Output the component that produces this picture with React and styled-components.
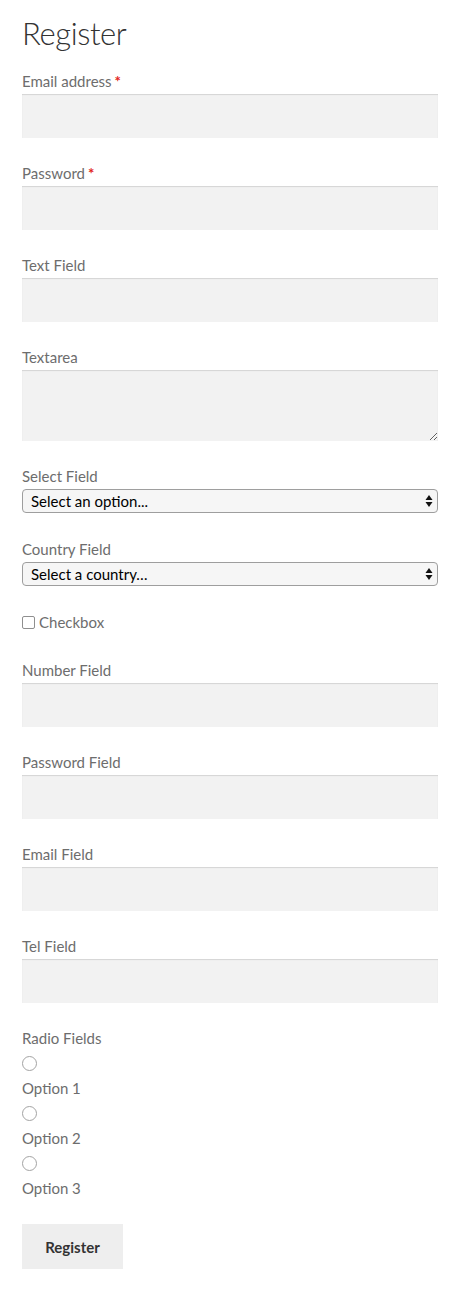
import styled, { createGlobalStyle } from "styled-components";

const GlobalStyle = createGlobalStyle`
  body {
    margin: 0;
    background: #ffffff;
    font-family: "Lato", "Liberation Sans", sans-serif;
  }
`;

const textFields = [
  { label: "Email address", type: "email", required: true },
  { label: "Password", type: "password", required: true },
  { label: "Text Field", type: "text" },
];

const lowerFields = [
  { label: "Number Field", type: "number" },
  { label: "Password Field", type: "password" },
  { label: "Email Field", type: "email" },
  { label: "Tel Field", type: "tel" },
];

function SelectArrows() {
  return (
    <SCArrows width="8" height="14" viewBox="0 0 8 14">
      <path d="M4 1 L7.5 6 L0.5 6 Z" fill="#111" />
      <path d="M4 13 L7.5 8 L0.5 8 Z" fill="#111" />
    </SCArrows>
  );
}

export default function App() {
  return (
    <>
      <GlobalStyle />
      <SCForm onSubmit={(e) => e.preventDefault()}>
        <SCTitle>Register</SCTitle>
        {textFields.map((f) => (
          <SCRow key={f.label}>
            <SCLabel>
              {f.label}
              {f.required ? <SCRequired>*</SCRequired> : ""}
            </SCLabel>
            <SCInput type={f.type} />
          </SCRow>
        ))}
        <SCRow>
          <SCLabel>Textarea</SCLabel>
          <SCTextarea />
        </SCRow>
        <SCRow $gap={23}>
          <SCLabel>Select Field</SCLabel>
          <SCSelectWrap>
            <SCSelect defaultValue="">
              <option value="">Select an option...</option>
            </SCSelect>
            <SelectArrows />
          </SCSelectWrap>
        </SCRow>
        <SCRow $gap={23}>
          <SCLabel>Country Field</SCLabel>
          <SCSelectWrap>
            <SCSelect defaultValue="">
              <option value="">Select a country…</option>
            </SCSelect>
            <SelectArrows />
          </SCSelectWrap>
        </SCRow>
        <SCRow>
          <SCCheckLabel>
            <SCCheckbox type="checkbox" />
            Checkbox
          </SCCheckLabel>
        </SCRow>
        {lowerFields.map((f) => (
          <SCRow key={f.label}>
            <SCLabel>{f.label}</SCLabel>
            <SCInput type={f.type} />
          </SCRow>
        ))}
        <SCRow>
          <SCLabel>Radio Fields</SCLabel>
          {["Option 1", "Option 2", "Option 3"].map((o) => (
            <div key={o}>
              <SCRadioLine>
                <SCRadio type="radio" name="radio" />
              </SCRadioLine>
              <SCLabel as="div">{o}</SCLabel>
            </div>
          ))}
        </SCRow>
        <SCButton type="submit">Register</SCButton>
      </SCForm>
    </>
  );
}

const SCForm = styled.form`
  padding: 13px 27px 40px 22px;
  display: flex;
  flex-direction: column;
  align-items: stretch;
`;

const SCTitle = styled.h2`
  font-family: "Lato", "Liberation Sans", sans-serif;
  font-weight: 300;
  font-size: 31px;
  line-height: 40px;
  color: #333333;
  margin: 0 0 15px 0;
  letter-spacing: -0.4px;
`;

const SCRow = styled.div`
  display: flex;
  flex-direction: column;
  margin-bottom: ${(props) => (props.$gap ? props.$gap : 22)}px;
`;

const SCLabel = styled.label`
  display: block;
  font-size: 15px;
  line-height: 26px;
  color: #6d6d6d;
`;

const SCRequired = styled.span`
  color: #e2231a;
  font-weight: 700;
  margin-left: 3px;
`;

const SCInput = styled.input`
  display: block;
  box-sizing: border-box;
  width: 100%;
  height: 44px;
  border: none;
  outline: none;
  background: #f2f2f2;
  box-shadow: inset 0 1px 1px rgba(0, 0, 0, 0.125);
  padding: 0 10px;
  font-family: inherit;
  font-size: 15px;
  -moz-appearance: textfield;
  &::-webkit-inner-spin-button,
  &::-webkit-outer-spin-button {
    -webkit-appearance: none;
  }
`;

const SCTextarea = styled.textarea`
  display: block;
  box-sizing: border-box;
  width: 100%;
  height: 71px;
  border: none;
  outline: none;
  background: #f2f2f2;
  box-shadow: inset 0 1px 1px rgba(0, 0, 0, 0.125);
  padding: 10px;
  font-family: inherit;
  font-size: 15px;
`;

const SCSelectWrap = styled.div`
  position: relative;
  height: 24px;
`;

const SCSelect = styled.select`
  appearance: none;
  -webkit-appearance: none;
  display: block;
  box-sizing: border-box;
  width: 100%;
  height: 24px;
  border: 1px solid #9e9e9e;
  border-radius: 4px;
  background: #f6f6f6;
  color: #000000;
  font-family: "Lato", "Liberation Sans", sans-serif;
  font-size: 15px;
  line-height: 22px;
  padding: 0 24px 0 8px;
  outline: none;
`;

const SCArrows = styled.svg`
  position: absolute;
  right: 5px;
  top: 5px;
  pointer-events: none;
`;

const SCCheckLabel = styled.label`
  display: flex;
  align-items: center;
  font-size: 15px;
  line-height: 26px;
  color: #6d6d6d;
`;

const SCCheckbox = styled.input`
  appearance: none;
  -webkit-appearance: none;
  width: 13px;
  height: 13px;
  margin: 0 4px 0 0;
  border: 1px solid #8f8f8f;
  border-radius: 2px;
  background: #ffffff;
  box-sizing: border-box;
`;

const SCRadioLine = styled.div`
  height: 24px;
  display: flex;
  align-items: center;
`;

const SCRadio = styled.input`
  appearance: none;
  -webkit-appearance: none;
  width: 15px;
  height: 15px;
  margin: 0;
  border: 1px solid #a3a3a3;
  border-radius: 50%;
  background: #ffffff;
  box-sizing: border-box;
`;

const SCButton = styled.button`
  align-self: flex-start;
  margin-top: 1px;
  width: 101px;
  height: 45px;
  border: none;
  background: #eeeeee;
  color: #333333;
  font-family: "Lato", "Liberation Sans", sans-serif;
  font-weight: 700;
  font-size: 15px;
  cursor: pointer;
`;
